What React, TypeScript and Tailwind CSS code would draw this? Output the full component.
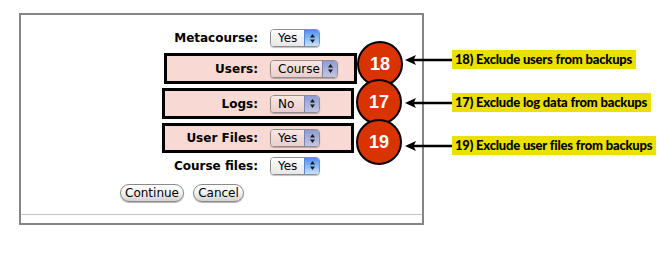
import React, { type JSX } from "react";

const formFont = { fontFamily: '"DejaVu Sans", "Liberation Sans", sans-serif' };

function Updown(): JSX.Element {
  return (
    <svg width="7" height="11" viewBox="0 0 7 11">
      <polygon points="3.5,1 6,4.5 1,4.5" fill="#1a1a1a" />
      <polygon points="3.5,10 6,6.5 1,6.5" fill="#1a1a1a" />
    </svg>
  );
}

function Select({ value, wide, tint }: { value: string; wide?: boolean; tint?: boolean }): JSX.Element {
  return (
    <div
      className={
        "flex h-[18px] items-stretch overflow-hidden rounded-[4px] border border-[#8e8e8e] shadow-[0_1px_1px_rgba(0,0,0,0.25)] " +
        (wide ? "w-[68px]" : "w-[50px]")
      }
    >
      <span
        className={
          "flex-1 pl-[7px] text-[12px] leading-[16px] text-black " +
          (tint ? "bg-linear-to-b from-[#fbe6e2] to-[#e9cfcb]" : "bg-linear-to-b from-white to-[#e6e6e6]")
        }
      >
        {value}
      </span>
      <span
        className={
          "flex w-[15px] items-center justify-center border-l " +
          (tint
            ? "border-[#7b86b8] bg-linear-to-b from-[#8d9bd2] via-[#a7b1dc] to-[#c3c6e2]"
            : "border-[#5a86cf] bg-linear-to-b from-[#4f8ff2] via-[#86b9f7] to-[#c8e3fe]")
        }
      >
        <Updown />
      </span>
    </div>
  );
}

function Button({ label, w }: { label: string; w: string }): JSX.Element {
  return (
    <div
      className={
        "flex h-[18px] items-center justify-center rounded-full border border-[#8a8a8a] bg-linear-to-b from-white via-[#f3f3f3] to-[#d2d2d2] text-[12px] text-black shadow-[0_1px_1px_rgba(0,0,0,0.3)] " +
        w
      }
    >
      {label}
    </div>
  );
}

function Badge({ n, pos }: { n: string; pos: string }): JSX.Element {
  return (
    <div
      className={
        "absolute flex h-[46px] w-[46px] items-center justify-center rounded-full border-2 border-black bg-[#d93400] text-[18px] font-bold text-white " +
        pos
      }
      style={{ fontFamily: '"Liberation Sans", Arial, sans-serif' }}
    >
      {n}
    </div>
  );
}

function Callout({ text, pos }: { text: string; pos: string }): JSX.Element {
  return (
    <div className={"absolute flex items-center " + pos}>
      <svg width="47" height="12" viewBox="0 0 47 12">
        <line x1="8" y1="6" x2="47" y2="6" stroke="#000" strokeWidth="2.5" />
        <polygon points="0,6 11,1 8.5,6 11,11" fill="#000" />
      </svg>
      <span
        className="flex h-[19px] items-center bg-[#ece000] pl-[3px] pr-[4px] text-[13px] font-black tracking-[-0.2px] text-black"
        style={{ fontFamily: 'Lato, "Open Sans", sans-serif' }}
      >
        {text}
      </span>
    </div>
  );
}

export default function App(): JSX.Element {
  return (
    <div className="relative h-[253px] w-[658px] overflow-hidden bg-white pl-[19px] pt-[13px]" style={formFont}>
      <div className="flex h-[212px] w-[405px] flex-col border-2 border-[#858585]">
        <div className="mt-[14px] flex h-[18px] items-center">
          <span className="w-[237px] text-right text-[12px] font-bold">Metacourse:</span>
          <div className="ml-[12px]">
            <Select value="Yes" />
          </div>
        </div>

        <div className="ml-[143px] mt-[6px] flex h-[31px] w-[193px] items-center border-[3px] border-black bg-[#f9d9d3]">
          <span className="w-[91px] text-right text-[12px] font-bold">Users:</span>
          <div className="ml-[12px]">
            <Select value="Course" wide tint />
          </div>
        </div>

        <div className="ml-[141px] mt-[4px] flex h-[31px] w-[192px] items-center border-[3px] border-black bg-[#f9d9d3]">
          <span className="w-[93px] text-right text-[12px] font-bold">Logs:</span>
          <div className="ml-[12px]">
            <Select value="No" tint />
          </div>
        </div>

        <div className="ml-[141px] mt-[4px] flex h-[30px] w-[192px] items-center border-[3px] border-black bg-[#f9d9d3]">
          <span className="w-[93px] text-right text-[12px] font-bold">User Files:</span>
          <div className="ml-[12px]">
            <Select value="Yes" tint />
          </div>
        </div>

        <div className="mt-[4px] flex h-[17px] items-center">
          <span className="w-[237px] text-right text-[12px] font-bold">Course files:</span>
          <div className="ml-[12px]">
            <Select value="Yes" />
          </div>
        </div>

        <div className="ml-[99px] mt-[10px] flex gap-[9px]">
          <Button label="Continue" w="w-[64px]" />
          <Button label="Cancel" w="w-[51px]" />
        </div>

        <div className="mt-[12px] h-px bg-[#c2c2c2]" />
      </div>

      <Badge n="18" pos="left-[357px] top-[41px]" />
      <Badge n="17" pos="left-[356px] top-[79px]" />
      <Badge n="19" pos="left-[356px] top-[119px]" />

      <Callout text="18) Exclude users from backups" pos="left-[405px] top-[50px]" />
      <Callout text="17) Exclude log data from backups" pos="left-[405px] top-[93px]" />
      <Callout text="19) Exclude user files from backups" pos="left-[405px] top-[136px]" />
    </div>
  );
}
